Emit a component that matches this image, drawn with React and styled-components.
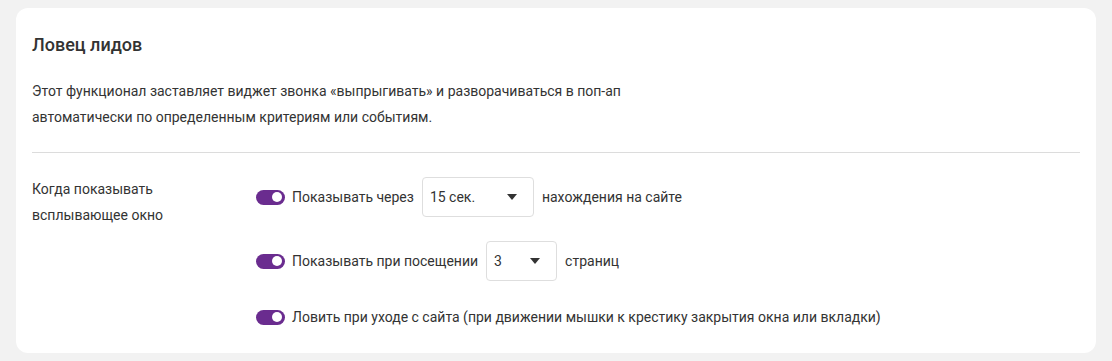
import styled, { createGlobalStyle } from 'styled-components';

const GlobalStyle = createGlobalStyle`
  html, body {
    margin: 0;
    padding: 0;
    background: #f2f2f2;
  }
  body {
    font-family: Roboto, "Liberation Sans", sans-serif;
    color: #333333;
  }
`;

const Page = styled.div`
  padding: 8px 16px;
`;

const Card = styled.section`
  background: #ffffff;
  border-radius: 12px;
  padding: 24px 16px;
`;

const Title = styled.h2`
  margin: 0;
  font-size: 18px;
  line-height: 26px;
  font-weight: 500;
  color: #333333;
`;

const Description = styled.p`
  margin: 20px 0 0;
  font-size: 14px;
  line-height: 26px;
  color: #333333;
`;

const Divider = styled.hr`
  margin: 22px 0 24px;
  border: 0;
  border-top: 1px solid #dcdcdc;
`;

const Settings = styled.div`
  display: grid;
  grid-template-columns: 224px 1fr;
`;

const Label = styled.div`
  font-size: 14px;
  line-height: 26px;
  margin-top: -1px;
`;

const Options = styled.div`
  display: flex;
  flex-direction: column;
  gap: 24px;
`;

const Row = styled.div`
  display: flex;
  align-items: center;
  gap: 8px;
  min-height: 24px;
  font-size: 14px;
  line-height: 20px;
`;

const Switch = styled.span`
  position: relative;
  flex: none;
  width: 29px;
  height: 15px;
  margin-right: -1px;
  border-radius: 8px;
  background: ${(p) => (p.$on ? '#6a2c8f' : '#c4c4c4')};

  &::after {
    content: '';
    position: absolute;
    top: 2.5px;
    left: ${(p) => (p.$on ? '16px' : '3px')};
    width: 10px;
    height: 10px;
    border-radius: 50%;
    background: #ffffff;
  }
`;

const Select = styled.div`
  box-sizing: border-box;
  display: flex;
  align-items: center;
  justify-content: space-between;
  width: ${(p) => p.$width}px;
  height: 40px;
  padding: 0 16px 0 7px;
  border: 1px solid #dedede;
  border-radius: 4px;
  font-size: 14px;
  color: #333333;
`;

const Caret = styled.span`
  width: 0;
  height: 0;
  border-left: 5px solid transparent;
  border-right: 5px solid transparent;
  border-top: 6px solid #333333;
`;

export default function App() {
  return (
    <>
      <GlobalStyle />
      <Page>
        <Card>
          <Title>Ловец лидов</Title>
          <Description>
            Этот функционал заставляет виджет звонка «выпрыгивать» и разворачиваться в поп-ап
            <br />
            автоматически по определенным критериям или событиям.
          </Description>
          <Divider />
          <Settings>
            <Label>
              Когда показывать
              <br />
              всплывающее окно
            </Label>
            <Options>
              <Row>
                <Switch $on />
                <span>Показывать через</span>
                <Select $width={112}>
                  <span>15 сек.</span>
                  <Caret />
                </Select>
                <span>нахождения на сайте</span>
              </Row>
              <Row>
                <Switch $on />
                <span>Показывать при посещении</span>
                <Select $width={71}>
                  <span>3</span>
                  <Caret />
                </Select>
                <span>страниц</span>
              </Row>
              <Row>
                <Switch $on />
                <span>Ловить при уходе с сайта (при движении мышки к крестику закрытия окна или вкладки)</span>
              </Row>
            </Options>
          </Settings>
        </Card>
      </Page>
    </>
  );
}
